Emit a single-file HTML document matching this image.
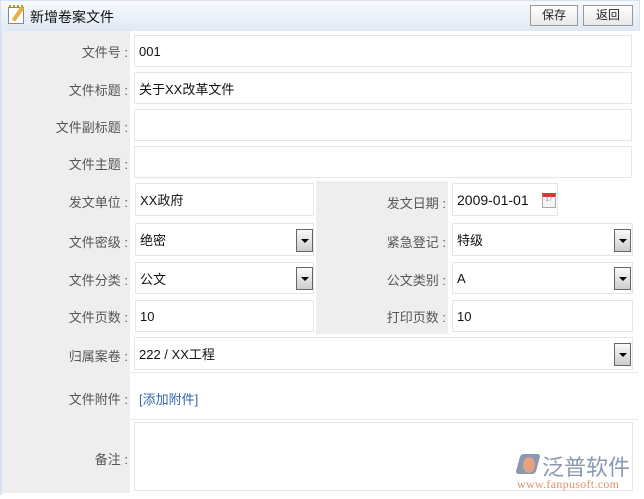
<!DOCTYPE html><html><head><meta charset="utf-8"><style>
*{margin:0;padding:0;box-sizing:border-box}
body{width:644px;height:499px;background:#fff;font-family:"Liberation Sans","Noto Sans CJK SC",sans-serif;font-size:13px;position:relative;overflow:hidden}
.a{position:absolute}
.hd{left:0;top:0;width:640px;height:31px;background:linear-gradient(#f7fafd,#dfe9f5);border:1px solid #d6e2f0;border-bottom:none}
.lab{color:#555;text-align:right;width:128px;left:0}
.box{border:1px solid #e6e6e6;background:#fff;color:#111;padding-left:4px;display:flex;align-items:center}
.dd{width:17px;height:23px;border:1px solid #666;background:linear-gradient(#fafafa,#ccc)}
.dd:after{content:"";position:absolute;left:4px;top:9px;border:4px solid transparent;border-top:4px solid #000}
.btn{top:5px;height:21px;border:1px solid #999;background:linear-gradient(#fff,#e8e8e8);text-align:center;line-height:19px;font-size:12px;color:#222}
</style></head><body>
<div class="a hd"></div>
<div class="a" style="left:8px;top:7px;width:16px;height:17px;border:1px solid #888;background:#fff"></div>
<div class="a" style="left:9px;top:5px;width:14px;height:3px;border-top:2px dotted #c90"></div>
<div class="a" style="left:16px;top:6px;width:4px;height:16px;background:#e8b040;transform:rotate(35deg)"></div>
<div class="a" style="left:30px;top:7px;font-size:14px;color:#111">新增卷案文件</div>
<div class="a btn" style="left:530px;width:48px">保存</div>
<div class="a btn" style="left:583px;width:50px">返回</div>
<div class="a" style="left:0;top:31px;width:2px;height:464px;background:#d6e2f0"></div>
<div class="a" style="left:2px;top:31px;width:128px;height:462px;background:#eee"></div>
<div class="a" style="left:130px;top:31px;width:508px;height:462px;background:#fff"></div>
<div class="a" style="left:319px;top:181px;width:129px;height:153px;background:#eee"></div>
<div class="a" style="left:316px;top:181px;width:3px;height:153px;background:#eee"></div>

<div class="a lab" style="top:42px">文件号 :</div>
<div class="a box" style="left:134px;top:35px;width:498px;height:32px">001</div>
<div class="a lab" style="top:80px">文件标题 :</div>
<div class="a box" style="left:134px;top:72px;width:498px;height:32px">关于XX改革文件</div>
<div class="a lab" style="top:117px">文件副标题 :</div>
<div class="a box" style="left:134px;top:109px;width:498px;height:32px"></div>
<div class="a lab" style="top:154px">文件主题 :</div>
<div class="a box" style="left:134px;top:146px;width:498px;height:32px"></div>

<div class="a lab" style="top:192px">发文单位 :</div>
<div class="a box" style="left:135px;top:183px;width:179px;height:33px">XX政府</div>
<div class="a lab" style="top:193px;left:318px">发文日期 :</div>
<div class="a box" style="left:452px;top:183px;width:106px;height:33px;font-size:14px">2009-01-01</div>
<div class="a" style="left:542px;top:193px;width:14px;height:15px;border:1px solid #aaa;border-top:4px solid #d33;background:#f4f4f4;font-size:6px;color:#888;text-align:center">17</div>

<div class="a lab" style="top:232px">文件密级 :</div>
<div class="a box" style="left:135px;top:223px;width:179px;height:33px">绝密</div>
<div class="a dd" style="left:296px;top:229px"></div>
<div class="a lab" style="top:232px;left:318px">紧急登记 :</div>
<div class="a box" style="left:452px;top:223px;width:181px;height:33px">特级</div>
<div class="a dd" style="left:614px;top:229px"></div>

<div class="a lab" style="top:270px">文件分类 :</div>
<div class="a box" style="left:135px;top:262px;width:179px;height:32px">公文</div>
<div class="a dd" style="left:296px;top:267px"></div>
<div class="a lab" style="top:270px;left:318px">公文类别 :</div>
<div class="a box" style="left:452px;top:262px;width:181px;height:32px">A</div>
<div class="a dd" style="left:614px;top:267px"></div>

<div class="a lab" style="top:307px">文件页数 :</div>
<div class="a box" style="left:135px;top:300px;width:179px;height:32px">10</div>
<div class="a lab" style="top:307px;left:318px">打印页数 :</div>
<div class="a box" style="left:452px;top:300px;width:181px;height:32px">10</div>

<div class="a lab" style="top:346px">归属案卷 :</div>
<div class="a box" style="left:134px;top:337px;width:499px;height:33px">222 / XX工程</div>
<div class="a dd" style="left:614px;top:343px"></div>
<div class="a" style="left:130px;top:372px;width:508px;height:1px;background:#e8e8e8"></div>
<div class="a lab" style="top:389px">文件附件 :</div>
<div class="a" style="left:139px;top:389px;color:#3366aa">[添加附件]</div>
<div class="a" style="left:130px;top:419px;width:508px;height:1px;background:#e8e8e8"></div>
<div class="a lab" style="top:449px">备注 :</div>
<div class="a box" style="left:134px;top:422px;width:499px;height:69px"></div>
<div class="a" style="left:518px;top:454px;width:20px;height:20px;background:#8a98b0;transform:skewX(-15deg);border-radius:3px"></div>
<div class="a" style="left:523px;top:457px;width:12px;height:16px;background:#e4a080;border-radius:50%"></div>
<div class="a" style="left:542px;top:450px;font-size:22px;color:#8a98b0">泛普软件</div>
<div class="a" style="left:517px;top:477px;font-size:12px;color:#e09070;font-family:'Liberation Serif',serif;letter-spacing:0.3px">www.fanpusoft.com</div>
</body></html>
